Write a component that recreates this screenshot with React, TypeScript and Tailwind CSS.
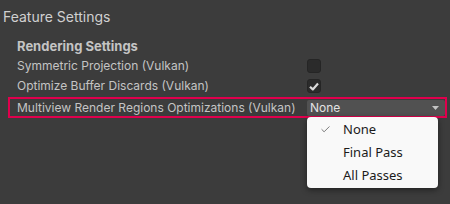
import { Check } from "lucide-react";

const options = ["None", "Final Pass", "All Passes"];

function Checkbox({ checked }: { checked?: boolean }) {
  return (
    <div className="flex h-[14px] w-[14px] items-center justify-center rounded-[3px] border border-[#252525] bg-[#2b2b2b]">
      {checked && (
        <svg width="10" height="9" viewBox="0 0 10 9">
          <path d="M1 4.8 L3.8 7.4 L9 1.6" fill="none" stroke="#dcdcdc" strokeWidth="2.2" strokeLinejoin="round" />
        </svg>
      )}
    </div>
  );
}

function Row({ label, children }: { label: string; children?: React.ReactNode }) {
  return (
    <div className="flex h-5 items-center pl-[17px]">
      <span className="w-[290px] shrink-0">{label}</span>
      {children}
    </div>
  );
}

export default function App() {
  return (
    <div className="relative h-[204px] w-[450px] overflow-hidden bg-[#3c3c3c] pt-[7px] font-['Inter',sans-serif] text-[12px] text-[#c4c4c4]">
      <div className="h-5 pl-[3px] text-[14px] leading-5 text-[#d0d0d0]">Feature Settings</div>
      <div className="mt-[9px] h-5 pl-[17px] text-[13px] font-bold leading-5">Rendering Settings</div>
      <Row label="Symmetric Projection (Vulkan)">
        <Checkbox />
      </Row>
      <Row label="Optimize Buffer Discards (Vulkan)">
        <Checkbox checked />
      </Row>
      <div className="ml-2 mt-px flex h-[21px] w-[439px] items-center border-2 border-[#e0004d] pl-[7px]">
        <span className="w-[290px] shrink-0 whitespace-nowrap">Multiview Render Regions Optimizations (Vulkan)</span>
        <div className="flex h-[16px] flex-1 items-center justify-between rounded-[2px] bg-[#515151] pl-[3px] pr-[6px] text-[#e2e2e2]">
          <span>None</span>
          <svg width="7" height="4" viewBox="0 0 7 4">
            <path d="M0 0 H7 L3.5 4 Z" fill="#c4c4c4" />
          </svg>
        </div>
      </div>
      <div className="absolute left-[307px] top-[117px] w-[131px] rounded-[4px] bg-[#f9f9f9] py-[1px] font-['Noto_Sans',sans-serif] text-[13px] text-[#1b1b1b] shadow-[0_2px_6px_rgba(0,0,0,0.45)]">
        {options.map((o, i) => (
          <div key={o} className="flex h-[23px] items-center">
            <span className="flex w-[34px] justify-center pl-[2px]">
              {i === 0 && <Check size={11} strokeWidth={1.4} color="#333" />}
            </span>
            <span className="pl-[2px]">{o}</span>
          </div>
        ))}
      </div>
    </div>
  );
}
